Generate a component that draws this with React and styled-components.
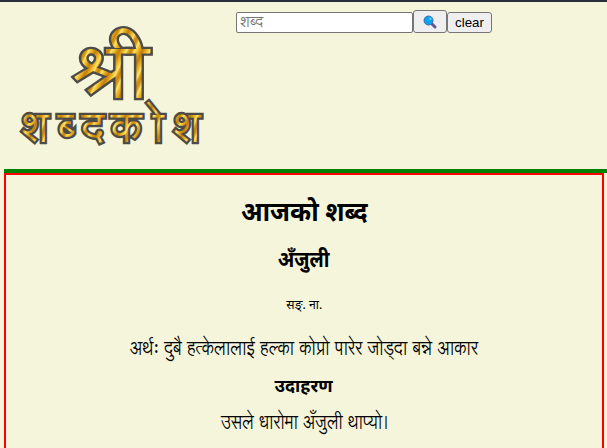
import React from 'react';
import styled, { createGlobalStyle } from 'styled-components';

const GlobalStyle = createGlobalStyle`
  * { box-sizing: border-box; }
  body { margin: 0; overflow: hidden; background: beige; color: #000; }
`;
const Page = styled.div`
  height: 448px;
  display: flex;
  flex-direction: column;
  overflow: hidden;
  border-top: 2px solid #2b2d3b;
  padding-left: 4px;
  font-family: 'Noto Sans', sans-serif;
`;
const Header = styled.header`
  display: flex;
  height: 171px;
  flex-shrink: 0;
  border-bottom: 4px solid green;
`;
const Logo = styled.svg`
  width: 216px;
  height: 166px;
  overflow: visible;
  flex-shrink: 0;
  font-family: 'Lohit Devanagari', 'Noto Sans', sans-serif;
  text {
    fill: url(#gold);
    stroke: #4d4b47;
    stroke-width: 4.6px;
    paint-order: stroke;
  }
`;
const Search = styled.form`
  display: flex;
  align-items: flex-start;
  padding: 8px 0 0 16px;
`;
const Field = styled.input`
  width: 177px;
  height: 21px;
  margin-top: 2px;
  padding: 1px 3px;
  border: 1px solid #767676;
  border-radius: 2px;
  background: #fff;
  font: 15px 'Lohit Devanagari', 'Liberation Sans', sans-serif;
  &::placeholder { color: #757575; }
`;
const Button = styled.button`
  display: flex;
  align-items: center;
  justify-content: center;
  width: ${p => p.$width}px;
  height: ${p => p.$height}px;
  margin-top: ${p => p.$top}px;
  padding: 0;
  border: 1px solid #767676;
  border-radius: 3px;
  background: #efefef;
  color: #000;
  font: 13.33px 'Liberation Sans', sans-serif;
`;
const Entry = styled.main`
  flex: 1;
  width: 600px;
  border: 2px solid red;
  border-bottom: 0;
  display: flex;
  flex-direction: column;
  align-items: center;
`;
const Line = styled.p`
  margin: ${p => p.$gap}px 0 0;
  height: ${p => p.$height}px;
  line-height: ${p => p.$height}px;
  font-size: ${p => p.$size}px;
  font-weight: ${p => (p.$bold ? 700 : 400)};
  font-family: ${p => (p.$light ? "'Lohit Devanagari'" : "'Noto Sans'")}, 'Noto Sans', sans-serif;
  transform: scaleX(${p => p.$condense || 1});
  white-space: nowrap;
`;

const letters = [
  { x: 17, t: 'श' }, { x: 54, t: 'ब्\u200d' }, { x: 78, t: 'द' },
  { x: 107, t: 'क' }, { x: 136, t: '\u00a0ो' }, { x: 169, t: 'श' },
];

function Wordmark() {
  return (
    <Logo viewBox="0 0 216 166">
      <defs>
        <linearGradient id="gold" x1="0" y1="0" x2="9" y2="4" gradientUnits="userSpaceOnUse" spreadMethod="reflect">
          <stop offset="0" stopColor="#c17c08" />
          <stop offset=".25" stopColor="#e0a21a" />
          <stop offset=".5" stopColor="#f5c93c" />
          <stop offset=".65" stopColor="#ffe673" />
          <stop offset=".8" stopColor="#dfa51e" />
          <stop offset="1" stopColor="#c98408" />
        </linearGradient>
      </defs>
      <text x="64.5" y="96" fontSize="75" transform="scale(1.07 1)">श्री</text>
      {letters.map(l => <text key={l.x} x={l.x} y="139.5" fontSize="42">{l.t}</text>)}
    </Logo>
  );
}

function SearchIcon() {
  return (
    <svg width="14" height="14" viewBox="0 0 14 14">
      <path d="M8.5 8.5 L12 12" stroke="#625796" strokeWidth="3" strokeLinecap="round" />
      <circle cx="5.5" cy="5.5" r="4.5" fill="#03a5ef" stroke="#4668ae" />
      <circle cx="7.3" cy="3.8" r="1" fill="#7edcff" />
    </svg>
  );
}

export default function App() {
  return (
    <Page>
      <GlobalStyle />
      <Header>
        <Wordmark />
        <Search>
          <Field placeholder="शब्द" />
          <Button type="button" aria-label="search" $width={34} $height={23} $top={0}><SearchIcon /></Button>
          <Button type="button" $width={45} $height={21} $top={2}>clear</Button>
        </Search>
      </Header>
      <Entry>
        <Line as="h1" $bold $size={27} $condense={0.94} $height={36} $gap={18}>आजको शब्द</Line>
        <Line as="h2" $bold $size={21.5} $condense={0.9} $height={30} $gap={15}>अँजुली</Line>
        <Line $size={12.5} $condense={0.98} $height={18} $gap={22}>सङ्. ना.</Line>
        <Line $light $size={20} $condense={0.838} $height={28} $gap={21}>अर्थः दुबै हत्केलालाई हल्का कोप्रो पारेर जोड्दा बन्ने आकार</Line>
        <Line as="h3" $bold $size={17} $condense={1.05} $height={24} $gap={11}>उदाहरण</Line>
        <Line $light $size={20} $condense={0.815} $height={28} $gap={11}>उसले धारोमा अँजुली थाप्यो।</Line>
      </Entry>
    </Page>
  );
}
